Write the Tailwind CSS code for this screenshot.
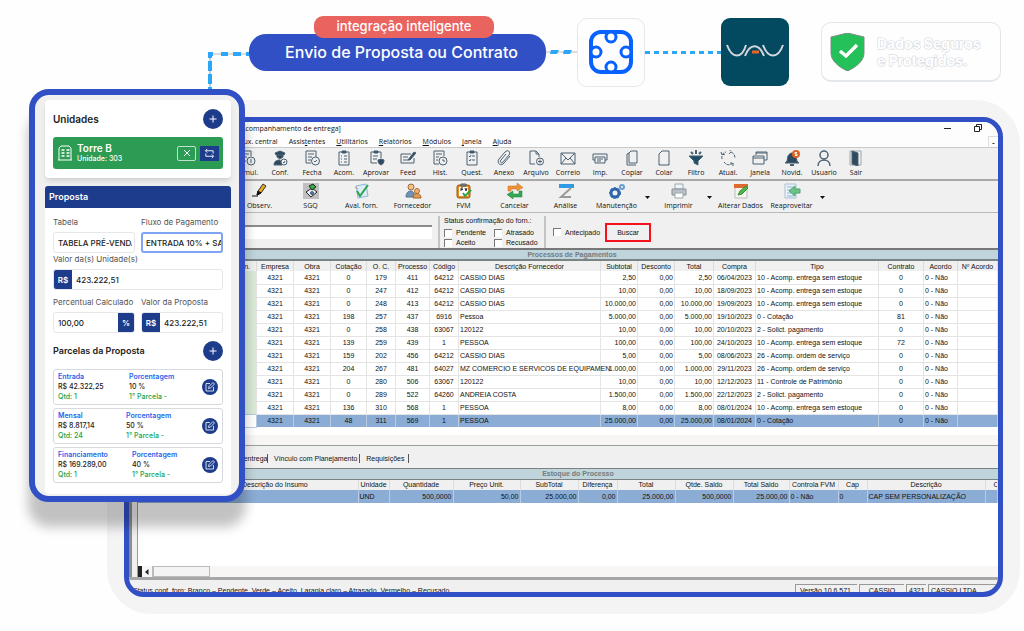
<!DOCTYPE html>
<html lang="pt-BR">
<head>
    <meta charset="UTF-8">
    <meta name="viewport" content="width=device-width, initial-scale=1.0">
    <title>Envio de Proposta ou Contrato</title>
    <script src="https://cdn.jsdelivr.net/npm/@tailwindcss/browser@4"></script>
</head>
<body class="bg-[#fefefe] font-['Inter',sans-serif] text-black">
<main class="relative flex min-h-screen flex-col">

    <!-- Fluxo da integração -->
    <header class="flex h-[100px] items-center pt-1 pl-[207px] pr-[23px]">
        <svg class="h-12 w-[42px] shrink-0 self-end" viewBox="0 0 42 48" fill="none" stroke="#2ba6f8" stroke-width="4">
            <path d="M3 2H42" stroke="#b9bcc2" stroke-width="1"/>
            <path d="M1 2H6M14 2h7M26 2h8M39 2h4"/>
            <path d="M3 0V48" stroke="#8a93a0" stroke-width="1"/>
            <path d="M3 0V6M3 9v10M3 22v10M3 35v14"/>
        </svg>
        <div class="relative flex h-[37px] w-[297px] shrink-0 items-center justify-center rounded-[17px] bg-[#3250c6] pl-2">
            <span class="absolute -top-[18px] left-[65px] flex h-[22px] w-[180px] items-center justify-center rounded-[9px] bg-[#e9635f] text-[13px] font-medium text-white">integração inteligente</span>
            <h1 class="text-[16px] font-medium whitespace-nowrap text-white">Envio de Proposta ou Contrato</h1>
        </div>
        <svg class="h-1.5 w-[31px] shrink-0" viewBox="0 0 31 6"><path d="M0 3H31" stroke="#b9bcc2"/><path d="M5 1h8l-2 4H4zM18 1h8l-2 4h-7z" fill="#2ba6f8"/></svg>
        <div class="flex h-[69px] w-[68px] shrink-0 items-center justify-center rounded-[10px] border border-[#e6e8eb]">
            <svg class="size-[46px]" viewBox="0 0 46 46" fill="none" stroke="#0762ff" stroke-width="4">
                <rect x="3" y="3" width="40" height="40" rx="10"/>
                <circle cx="23" cy="8" r="5" fill="#fff" stroke-width="3"/><circle cx="23" cy="38" r="5" fill="#fff" stroke-width="3"/>
                <circle cx="8" cy="23" r="5" fill="#fff" stroke-width="3"/><circle cx="38" cy="23" r="5" fill="#fff" stroke-width="3"/>
            </svg>
        </div>
        <div class="h-[3px] min-w-4 flex-1 bg-[repeating-linear-gradient(90deg,#2ba6f8_0_5px,#fefefe_5px_9px)]"></div>
        <div class="flex size-[68px] shrink-0 items-center justify-center rounded-[9px] bg-[#03495f]">
            <svg class="h-5 w-[60px]" viewBox="0 0 60 20" fill="none" stroke="#d3d6dc" stroke-width="2">
                <path d="M2 3C7 17 17 17 21 3M20 14C25 1 34 1 39 14M38 3c5 14 15 14 20 0"/>
                <path d="M27 10h7" stroke="#e8652c" stroke-width="3"/>
            </svg>
        </div>
        <div class="ml-8 flex h-[60px] w-[180px] shrink-0 items-center gap-3 rounded-[10px] border border-b-2 border-[#e3e6ea] pl-2">
            <svg class="h-[38px] w-[35px] shrink-0" viewBox="0 0 35 38"><path d="M17.500 0 34 4v16c0 8-8 14-16.500 18C9 34 1 28 1 20V4z" fill="#24c05a" stroke="#7f8b86" stroke-width="1"/><path d="m10 18 6 5L27 12" fill="none" stroke="#fff" stroke-width="3.500"/></svg>
            <p class="text-[14px] leading-[17px] font-bold whitespace-nowrap text-white [paint-order:stroke] [-webkit-text-stroke:1px_#cfd4da]">Dados Seguros<br>e Protegidos.</p>
        </div>
    </header>

    <div class="mb-[17px] ml-[107px] mr-1 flex flex-1 flex-col rounded-[44px] bg-[#f4f4f4] p-[17px]">
        <!-- Janela do sistema -->
        <section class="flex flex-1 flex-col overflow-hidden rounded-[20px] border-[5px] border-[#3250c6] bg-[#f0f0f0] font-['Open_Sans',sans-serif] text-[7px] leading-[9px] whitespace-nowrap text-[#111]">
            <div class="flex h-3 items-center justify-between bg-[#fdfdfd] pl-[112px] pr-4">
                <h2>Acompanhamento de entrega]</h2>
                <div class="flex items-center gap-[22px]">
                    <svg class="size-2" viewBox="0 0 8 8"><path d="M0 4.500h7" stroke="#222"/></svg>
                    <svg class="size-2" viewBox="0 0 8 8" fill="none" stroke="#222"><path d="M.5 2.500h5v5h-5zM2.500 2V.5h5v5H6"/></svg>
                </div>
            </div>
            <nav class="flex h-[14px] items-center gap-[11px] border-b border-[#c9c9c9] bg-[#fdfdfd] pl-[110px] pt-0.5">
                <a href="#">Aux. central</a>
                <a href="#">Assis<u>t</u>entes</a>
                <a href="#"><u>U</u>tilitários</a>
                <a href="#"><u>R</u>elatórios</a>
                <a href="#"><u>M</u>ódulos</a>
                <a href="#"><u>J</u>anela</a>
                <a href="#"><u>A</u>juda</a>
                <span class="ml-auto flex h-3 w-[10px] items-center justify-center border-l border-t border-[#ddd] font-bold">-</span>
            </nav>

            <!-- Barra principal -->
            <div id="barra1" class="flex h-[33px] shrink-0 border-b-2 border-[#a9a9a9] pl-[103px] pt-0.5"></div>

            <!-- Barra secundária -->
            <div id="barra2" class="flex h-8 shrink-0 border-b border-[#b9b9b9] pl-[105px] pt-0.5"></div>

            <!-- Filtros -->
            <form class="flex h-[37px] shrink-0 items-center border-b-2 border-[#777] pl-[111px] pt-[3px] font-['Liberation_Sans',sans-serif]">
                <input type="text" aria-label="Pesquisa" class="h-[14px] w-[192px] border-t-2 border-[#8c8c8c] bg-white">
                <fieldset aria-labelledby="status" class="ml-1.5 flex h-8 w-[108px] flex-col border-x-2 border-[#c4c4c4] pl-1">
                    <span id="status" class="leading-[9px]">Status confirmação do forn.:</span>
                    <div class="mt-[3px] grid grid-cols-[50px_50px] gap-y-px leading-[9px]">
                        <label class="flex items-center gap-1"><input type="checkbox" class="size-2 appearance-none border-l border-t border-[#777] bg-white">Pendente</label>
                        <label class="flex items-center gap-1"><input type="checkbox" class="size-2 appearance-none border-l border-t border-[#777] bg-white">Atrasado</label>
                        <label class="flex items-center gap-1"><input type="checkbox" class="size-2 appearance-none border-l border-t border-[#777] bg-white">Aceito</label>
                        <label class="flex items-center gap-1"><input type="checkbox" class="size-2 appearance-none border-l border-t border-[#777] bg-white">Recusado</label>
                    </div>
                </fieldset>
                <label class="ml-[7px] flex items-center gap-1"><input type="checkbox" class="size-2 appearance-none border-l border-t border-[#777] bg-white">Antecipado</label>
                <button type="button" class="ml-[5px] h-[19px] w-[46px] border-2 border-[#f5121c]">Buscar</button>
            </form>

            <div class="flex flex-1 border-l-[3px] border-[#8d8d8d] font-['Liberation_Sans',sans-serif]">
                <div class="w-[6px] shrink-0 border-r border-[#999]"></div>
                <div class="flex min-w-0 flex-1 flex-col bg-white">
                    <h3 class="h-[11px] border-b-2 border-[#7a8284] bg-[#bfd4db] pl-2 text-center leading-[10px] font-bold text-[#737b80]">Processos de Pagamentos</h3>
                    <table class="w-full table-fixed border-collapse">
                        <colgroup>
                            <col class="w-[118px]"><col class="w-[37px]"><col class="w-[37px]"><col class="w-[36px]"><col class="w-[29px]"><col class="w-[34px]"><col class="w-[29px]"><col class="w-[142px]"><col class="w-[37px]"><col class="w-[37px]"><col class="w-[39px]"><col class="w-[42px]"><col class="w-[123px]"><col class="w-[45px]"><col class="w-[34px]"><col>
                        </colgroup>
                        <thead>
                            <tr class="h-[10px] bg-[#f0f0f0] *:border-r *:border-[#dcdcdc] *:font-normal">
                                <th class="pr-1.5 text-right">n.</th><th>Empresa</th><th>Obra</th><th>Cotação</th><th>O. C.</th><th>Processo</th><th>Código</th><th>Descrição Fornecedor</th><th>Subtotal</th><th>Desconto</th><th>Total</th><th>Compra</th><th>Tipo</th><th>Contrato</th><th>Acordo</th><th>Nº Acordo</th>
                            </tr>
                        </thead>
                        <tbody id="processos"></tbody>
                    </table>
                    <div class="h-[7px]"></div>
                    <div class="h-[11px] border-b border-[#9aa09e] bg-[#f7f6f4]"></div>
                    <div class="flex h-[22px] items-center bg-[#f0f0f0] pl-[80px] pt-1">
                        <span class="w-[50px] border-r border-[#555] pr-0.5 text-right">Acomp. entrega</span>
                        <span class="border-r border-[#555] pl-1.5 pr-0.5">Vínculo com Planejamento</span>
                        <span class="border-r border-[#555] pl-1.5 pr-1">Requisições</span>
                    </div>
                    <h3 class="h-3 border-b border-t border-[#7a8284] bg-[#bfd4db] pl-5 text-center leading-[10px] font-bold text-[#737b80]">Estoque do Processo</h3>
                    <table class="w-full table-fixed border-collapse">
                        <colgroup>
                            <col class="w-[220px]"><col class="w-[31px]"><col class="w-[64px]"><col class="w-[67px]"><col class="w-[58px]"><col class="w-[39px]"><col class="w-[58px]"><col class="w-[58px]"><col class="w-[56px]"><col class="w-[49px]"><col class="w-[29px]"><col class="w-[118px]"><col>
                        </colgroup>
                        <thead>
                            <tr class="h-[10px] bg-[#f0f0f0] *:border-r *:border-[#dcdcdc] *:font-normal">
                                <th class="pl-[104px] text-left">Descrição do Insumo</th><th>Unidade</th><th>Quantidade</th><th>Preço Unit.</th><th>SubTotal</th><th>Diferença</th><th>Total</th><th>Qtde. Saldo</th><th>Total Saldo</th><th>Controla FVM</th><th>Cap</th><th>Descrição</th><th class="overflow-hidden pl-2 text-left">C</th>
                            </tr>
                        </thead>
                        <tbody>
                            <tr class="h-[13px] bg-[#8badd5] *:border-r *:border-[#b9cbe0] *:px-px">
                                <td></td><td>UND</td><td class="text-right">500,0000</td><td class="text-right">50,00</td><td class="text-right">25.000,00</td><td class="text-right">0,00</td><td class="text-right">25.000,00</td><td class="text-right">500,0000</td><td class="text-right">25.000,00</td><td>0 - Não</td><td>0</td><td>CAP SEM PERSONALIZAÇÃO</td><td></td>
                            </tr>
                        </tbody>
                    </table>
                    <div class="flex-1"></div>
                    <!-- Rolagem horizontal -->
                    <div class="flex h-[11px] bg-[#f7f6f4]">
                        <span class="w-1 bg-[#222]"></span>
                        <button type="button" aria-label="Rolar para a esquerda" class="flex w-[11px] items-center justify-center border-r border-[#bbb]"><svg class="size-1.5" viewBox="0 0 6 6"><path d="M4.500 0v6L1 3z" fill="#222"/></svg></button>
                        <span class="w-[57px] border border-[#bbb] bg-[#f4f4f4]"></span>
                    </div>
                </div>
            </div>
            <footer class="flex h-[15px] shrink-0 items-start gap-0.5 overflow-hidden border-t-[3px] border-[#a8a6a6] pl-1 font-['Liberation_Sans',sans-serif]">
                <span class="pt-1.5">Status conf. forn: Branco – Pendente&nbsp; Verde – Aceito&nbsp; Laranja claro – Atrasado&nbsp; Vermelho – Recusado</span>
                <span class="ml-auto mt-1 w-[62px] border-l border-t border-[#999] pl-1 pt-px">Versão 10.6.571</span>
                <span class="mt-1 w-[45px] border-l border-t border-[#999] pt-px text-center">CASSIO</span>
                <span class="mt-1 w-5 border-l border-t border-[#999] pl-0.5 pt-px">4321</span>
                <span class="mt-1 w-[70px] border-l border-t border-[#999] pl-0.5 pt-px">CASSIO LTDA</span>
            </footer>
        </section>
    </div>

    <!-- Cartão da proposta -->
    <aside class="absolute left-[29px] top-[89px] w-[216px] rounded-[20px] border-[6px] border-[#3250c6] bg-[#f0f0f0] pb-0.5 pl-2.5 pr-2 pt-[5px] text-[8px] leading-[10px] text-[#222] shadow-[0_24px_12px_1px_rgba(0,0,0,0.24)]">
        <section class="h-[78px] rounded-[4px] bg-white px-2 pt-[9px] shadow-md">
            <div class="flex h-5 items-center justify-between">
                <h2 class="text-[10px] font-semibold">Unidades</h2>
                <button type="button" aria-label="Adicionar unidade" class="flex size-5 items-center justify-center rounded-full bg-[#1d3c8b]"><svg class="size-2" viewBox="0 0 8 8"><path d="M4 .5v7M.5 4h7" stroke="#fff"/></svg></button>
            </div>
            <div class="mt-2 flex h-8 items-center rounded-[3px] bg-[#2c9c54] px-1 text-white">
                <svg class="size-4 shrink-0" viewBox="0 0 16 16" fill="none" stroke="#fff"><path d="M2 15V3l2-2h8l2 2v12M1 15h14"/><path d="M4.500 5h3m2 0h3m-8 3h3m2 0h3m-8 3h3m2 0h3" stroke-width="1.500"/></svg>
                <div class="ml-1 flex-1">
                    <p class="text-[10px] leading-3 font-semibold">Torre B</p>
                    <p class="text-[7px] font-medium">Unidade: 303</p>
                </div>
                <button type="button" aria-label="Remover" class="flex h-[15px] w-[19px] items-center justify-center rounded-[2px] border border-white/70"><svg class="size-2" viewBox="0 0 8 8"><path d="m1 1 6 6M7 1 1 7" stroke="#fff"/></svg></button>
                <button type="button" aria-label="Trocar" class="ml-1 flex h-[15px] w-[19px] items-center justify-center bg-[#1d3c8b]"><svg class="size-[11px]" viewBox="0 0 12 12" fill="none" stroke="#fff"><path d="M3.500 1 1.500 3l2 2M2 3h8v3M8.500 7l2 2-2 2M10 9H2V6"/></svg></button>
            </div>
        </section>

        <section class="mt-2 rounded-[4px] bg-white pb-[11px]">
            <h2 class="flex h-[22px] items-center rounded-t-[3px] bg-[#1d3c8b] pl-1 text-[9px] font-semibold text-white">Proposta</h2>
            <form class="px-2">
                <div class="grid grid-cols-2 gap-x-1.5 pt-2">
                    <div>
                        <label for="tabela" class="block h-4 pt-px text-[#555]">Tabela</label>
                        <input id="tabela" type="text" value="TABELA PRÉ-VENDAS" class="h-[21px] w-full rounded-[3px] border border-[#e5e7eb] pl-1 pr-0.5 text-[8px] font-medium">
                    </div>
                    <div>
                        <label for="fluxo" class="block h-4 pt-px text-[#555]">Fluxo de Pagamento</label>
                        <input id="fluxo" type="text" value="ENTRADA 10% + SALDO" class="h-[21px] w-full rounded-[3px] border-2 border-[#7ea4f3] pl-[3px] text-[8px] font-medium">
                    </div>
                </div>
                <label for="valor" class="block h-4 pt-px text-[#555]">Valor da(s) Unidade(s)</label>
                <div class="flex h-[21px] overflow-hidden rounded-[3px] border border-[#e5e7eb]">
                    <span class="flex w-[18px] shrink-0 items-center justify-center bg-[#1d3c8b] font-semibold text-white">R$</span>
                    <input id="valor" type="text" value="423.222,51" class="min-w-0 flex-1 px-1 font-medium">
                </div>
                <div class="grid grid-cols-2 gap-x-1.5 pt-[7px]">
                    <div>
                        <label for="percentual" class="block h-[15px] whitespace-nowrap text-[#555]">Percentual Calculado</label>
                        <div class="flex h-[21px] overflow-hidden rounded-[3px] border border-[#e5e7eb]">
                            <input id="percentual" type="text" value="100,00" class="min-w-0 flex-1 px-1 font-medium">
                            <span class="flex w-4 shrink-0 items-center justify-center bg-[#1d3c8b] font-semibold text-white">%</span>
                        </div>
                    </div>
                    <div>
                        <label for="proposta" class="block h-[15px] whitespace-nowrap text-[#555]">Valor da Proposta</label>
                        <div class="flex h-[21px] overflow-hidden rounded-[3px] border border-[#e5e7eb]">
                            <span class="flex w-[18px] shrink-0 items-center justify-center bg-[#1d3c8b] font-semibold text-white">R$</span>
                            <input id="proposta" type="text" value="423.222,51" class="min-w-0 flex-1 px-1 font-medium">
                        </div>
                    </div>
                </div>
                <div class="mt-2 flex h-5 items-center justify-between">
                    <h3 class="text-[9px] font-semibold whitespace-nowrap">Parcelas da Proposta</h3>
                    <button type="button" aria-label="Adicionar parcela" class="flex size-5 items-center justify-center rounded-full bg-[#1d3c8b]"><svg class="size-2" viewBox="0 0 8 8"><path d="M4 .5v7M.5 4h7" stroke="#fff"/></svg></button>
                </div>
                <div id="parcelas" class="mt-2 flex flex-col gap-[3px] text-[7px] font-medium whitespace-nowrap"></div>
            </form>
        </section>
    </aside>
</main>

<script>
// Ícones desenhados em 16x16
const ICONES = {
    simul: '<path d="M2 1h9v5M2 1v10h4M4 4h5M4 7h3"/><circle cx="11" cy="11" r="4"/><path d="M11 9v4"/>',
    conf: '<path d="M3 3l5-2 5 2-1 2H4z" fill="#2f4a5e"/><path d="M5 5v2l3 2 3-2V5z" fill="#2f4a5e"/><path d="M2 15c0-4 3-5 6-5l2 5z" fill="#2f4a5e"/><circle cx="12" cy="12" r="3" fill="#f0f0f0"/><path d="m11 12 1 1 1-2"/>',
    fecha: '<path d="M2 1h10v6M2 1v12h5M4 4h6M4 7h4M4 10h3"/><circle cx="11.500" cy="11" r="4" fill="#f0f0f0"/><path d="m10 11 1 1 2-2"/>',
    acom: '<path d="M3 2h10v13H3z"/><path d="M6 1h4v2H6z" fill="#2f4a5e"/><path d="M5 6h1m2 0h3M5 9h1m2 0h3M5 12h1m2 0h3"/>',
    aprovar: '<path d="M3 2h10v6M3 2v11h6"/><path d="M6 1h4v2H6z" fill="#2f4a5e"/><path d="M5 6h5M5 9h4"/><path d="m13 9 3 1c0 3-1 4-3 5-2-1-3-2-3-5z" fill="#2f4a5e"/>',
    feed: '<path d="M11 4H1v9h13V8M3 7h5M3 10h5"/><path d="m8 10 6-8 2 1-6 7z" fill="#2f4a5e"/>',
    hist: '<path d="M2 1h10v5M2 1v13h5M4 4h6M4 7h3M4 10h2"/><circle cx="11" cy="11" r="4" fill="#f0f0f0"/><path d="M11 9v2h2"/>',
    quest: '<path d="M3 2h10v13H3z"/><path d="M6 1h4v2H6z" fill="#2f4a5e"/><path d="m5 6 1 1 1-2m1 1h3M5 10l1 1 1-2m1 1h3"/>',
    anexo: '<path d="M14 6 8 13c-3 4-8 0-5-4l6-7c3-3 6 0 4 3l-6 7c-1 2-4 0-2-2l5-6"/>',
    arquivo: '<path d="M11 7V4L8 1H2v13h5M8 1v3h3"/><circle cx="12" cy="11.500" r="3.500"/><path d="M12 9.500v4M10 11.500h4"/>',
    correio: '<path d="M1 3h14v11H1zl7 7 7-7M1 14l5-6m9 6-5-6"/>',
    imp: '<path d="M3 10H1V4h14v6h-2M3 7h10v6H3zM5 9h6M5 11h4"/>',
    copiar: '<path d="M7 1h6v12H5V3zM5 3 3 4v11h9"/>',
    colar: '<path d="M6 1h7v14H3V4z"/>',
    filtro: '<path d="M1 6h14l-5 5v4l-4-2v-2z" fill="#1f4f66"/><path d="M5 4 3 2m5 2V0m3 4 2-2" stroke-width="2"/>',
    atual: '<path d="M2 9C1 5 4 2 6 2M1 2l1 3 3-1M11 2c3 1 4 4 4 6M9 4l2-2-1-2M13 13c-3 3-7 2-9-1m9 4V13h-3" stroke-dasharray="3 1"/>',
    janela: '<path d="M4 5V2h11v8h-3M4 3h11"/><path d="M1 6h11v8H1zM1 8h11"/>',
    novid: '<path d="M1 13c3-2 2-4 3-7 2-4 6-4 8 0 1 3 0 5 3 7z" fill="#2f4a5e"/><path d="M6 15h4" stroke-width="2"/><circle cx="12" cy="4" r="4" fill="#dd6420" stroke="none"/><path d="M13 2.500h-2V4h2v1.500h-2" stroke="#fff"/>',
    usuario: '<circle cx="8" cy="5" r="4" stroke-width="1.500"/><path d="M2 16c0-8 12-8 12 0" stroke-width="1.500"/>',
    sair: '<path d="M2 1v14h11V1z" stroke="#9aa5ad"/><path d="m4 1 6 2v13l-6-2z" fill="#2f4a5e"/>',
    observ: '<path d="M0 13h6" stroke="#111"/><path d="m5 12 1-4 5-7 3 2-5 7z" fill="#e4a91b" stroke="#333"/><path d="m5 12 1-4 3 2z" fill="#111" stroke="#111"/>',
    sgq: '<path d="M0 0h16v16H0z" fill="#c0c0c0" stroke="none"/><path d="m3 9 6-4 5 4-6 5z" fill="#eee" stroke="#222"/><path d="m6 3 4-2 3 3-4 3z" fill="#2fae43" stroke="#222"/><circle cx="9" cy="10" r="1.500" fill="#3a75c8"/>',
    aval: '<path d="M2 3 12 1l2 12-10 2z" fill="#dcecf8" stroke="#8bb6d6"/><path d="m3 8 3 5 8-11" stroke="#2fa34a" stroke-width="2"/><path d="m1 4 3 2" stroke="#e69a29"/>',
    fornecedor: '<circle cx="6" cy="4" r="3" fill="#f2c38e" stroke="#a5672c"/><path d="M1 14c0-8 9-8 9 0z" fill="#6d92b4" stroke="#55738e"/><circle cx="12" cy="8" r="2.500" fill="#f2b078" stroke="#b06a2b"/><path d="M8 15c0-6 8-6 8 0z" fill="#e49a55" stroke="#a5672c"/>',
    fvm: '<rect x="1" y="2" width="13" height="13" rx="2" fill="#e58a22" stroke="#9a5a10"/><path d="M3 4h9v9H3z" fill="#fff" stroke="none"/><path d="M5 1h5v2H5z" fill="#888"/><path d="M5 8V5h2M5 6.500h2M9 5l1 3 1-3" stroke="#333"/><path d="m7 10 2 3 6-6" stroke="#2fa34a" stroke-width="2"/>',
    cancelar: '<path d="M1 8V3h9V0l6 4.500L10 8V6H4v2z" fill="#ef9236" stroke="#c56b19" stroke-width=".5"/><path d="M15 8v6H6v2l-6-4.500L6 8v3h6V8z" fill="#35a854" stroke="#1d7d38" stroke-width=".5"/>',
    analise: '<path d="M1 1h15v4H1z" fill="#2d9be6" stroke="none"/><path d="M13 5 3 14h10" stroke="#9a9a9a" stroke-width="2"/>',
    manutencao: '<circle cx="6" cy="10" r="4" stroke="#2e66ac" stroke-width="3"/><circle cx="6" cy="10" r="5.500" stroke="#2e66ac" stroke-dasharray="2 2"/><circle cx="13" cy="4" r="2" stroke="#6a9bd0" stroke-width="2"/>',
    imprimir: '<path d="M4 1h8v5H4z" fill="#eef4fb" stroke="#9aa"/><path d="M1 6h14v6H1z" fill="#b9bfc6" stroke="#8a9097"/><path d="M4 10h8v5H4z" fill="#fff" stroke="#9aa"/>',
    alterar: '<path d="M2 2h12v13H2z" fill="#f6f6ef" stroke="#bbb"/><path d="M1 1h14v4H1z" fill="#de6a2f" stroke="none"/><path d="m5 12 2-4 6-5 2 2-6 6z" fill="#55b648" stroke="#2f8f3a"/>',
    reaproveitar: '<path d="M1 1h11v14H1z" fill="#eaf2fa" stroke="#a9bfd2"/><path d="M3 4h6M3 7h4M3 10h4M3 13h7" stroke="#8fb4d8"/><path d="m5 8 6-5v3h5v4h-5v3z" fill="#6cc38a" stroke="#4aa76b"/>'
};

function icone(nome) {
    return `<svg class="h-4 w-[18px]" viewBox="0 0 16 16" fill="none" stroke="#4a6173">${ICONES[nome]}</svg>`;
}

const barra1 = [['simul', 'Simul.'], ['conf', 'Conf.'], ['fecha', 'Fecha'], ['acom', 'Acom.'], ['aprovar', 'Aprovar'], ['feed', 'Feed'], ['hist', 'Hist.'], ['quest', 'Quest.'], ['anexo', 'Anexo'], ['arquivo', 'Arquivo'], ['correio', 'Correio'], ['imp', 'Imp.'], ['copiar', 'Copiar'], ['colar', 'Colar'], ['filtro', 'Filtro'], ['atual', 'Atual.'], ['janela', 'Janela'], ['novid', 'Novid.'], ['usuario', 'Usuario'], ['sair', 'Sair']];
document.getElementById('barra1').innerHTML = barra1.map(([i, t]) =>
    `<button type="button" class="flex w-8 shrink-0 flex-col items-center">${icone(i)}<span class="mt-0.5">${t}</span></button>`).join('');

// O terceiro valor indica se o botão tem menu suspenso
const barra2 = [['observ', 'Observ.'], ['sgq', 'SGQ'], ['aval', 'Aval. forn.'], ['fornecedor', 'Fornecedor'], ['fvm', 'FVM'], ['cancelar', 'Cancelar'], ['analise', 'Análise'], ['manutencao', 'Manutenção', true], ['imprimir', 'Imprimir', true], ['alterar', 'Alterar Dados'], ['reaproveitar', 'Reaproveitar', true]];
document.getElementById('barra2').innerHTML = barra2.map(([i, t, menu]) =>
    `<button type="button" class="flex w-[51px] shrink-0 flex-col items-center">${icone(i)}<span class="mt-0.5">${t}</span></button>` +
    (menu ? '<button type="button" aria-label="Mais opções" class="flex w-[11px] items-center justify-center"><svg class="h-[3px] w-[5px]" viewBox="0 0 5 3"><path d="M0 0h5L2.500 3z" fill="#111"/></svg></button>' : '')).join('');

const processos = [
    ['0', '179', '411', '64212', 'CASSIO DIAS', '2,50', '06/04/2023', '10 - Acomp. entrega sem estoque', '0'],
    ['0', '247', '412', '64212', 'CASSIO DIAS', '10,00', '18/09/2023', '10 - Acomp. entrega sem estoque', '0'],
    ['0', '248', '413', '64212', 'CASSIO DIAS', '10.000,00', '19/09/2023', '10 - Acomp. entrega sem estoque', '0'],
    ['198', '257', '437', '6916', 'Pessoa', '5.000,00', '19/10/2023', '0 - Cotação', '81'],
    ['0', '258', '438', '63067', '120122', '10,00', '20/10/2023', '2 - Solict. pagamento', '0'],
    ['139', '259', '439', '1', 'PESSOA', '100,00', '24/10/2023', '10 - Acomp. entrega sem estoque', '72'],
    ['159', '202', '456', '64212', 'CASSIO DIAS', '5,00', '08/06/2023', '26 - Acomp. ordem de serviço', '0'],
    ['204', '267', '481', '64027', 'MZ COMERCIO E SERVICOS DE EQUIPAMEN', '1.000,00', '29/11/2023', '26 - Acomp. ordem de serviço', '0'],
    ['0', '280', '506', '63067', '120122', '10,00', '12/12/2023', '11 - Controle de Patrimônio', '0'],
    ['0', '289', '522', '64260', 'ANDREIA COSTA', '1.500,00', '22/12/2023', '2 - Solict. pagamento', '0'],
    ['136', '310', '568', '1', 'PESSOA', '8,00', '08/01/2024', '10 - Acomp. entrega sem estoque', '0'],
    ['48', '311', '569', '1', 'PESSOA', '25.000,00', '08/01/2024', '0 - Cotação', '0']
];
document.getElementById('processos').innerHTML = processos.map((p, i) => {
    const ultimo = i === processos.length - 1;
    const linha = ultimo
        ? 'h-[13px] bg-[#8badd5] text-center *:border-r *:border-[#b9cbe0] *:px-px'
        : 'h-[13px] border-b border-[#e4e4e4] text-center *:border-r *:border-[#e4e4e4] *:px-px';
    const primeira = ultimo ? 'border border-[#222] bg-white' : 'bg-[#d9ead7]';
    return `<tr class="${linha}"><td class="${primeira}"></td><td>4321</td><td>4321</td><td>${p[0]}</td><td>${p[1]}</td><td>${p[2]}</td><td>${p[3]}</td>
        <td class="text-left">${p[4]}</td><td class="text-right">${p[5]}</td><td class="text-right">0,00</td><td class="text-right">${p[5]}</td>
        <td>${p[6]}</td><td class="text-left">${p[7]}</td><td>${p[8]}</td><td class="text-left">0 - Não</td><td></td></tr>`;
}).join('');

const parcelas = [
    ['Entrada', 'R$ 42.322,25', '1', '10 %', 'w-[71px]'],
    ['Mensal', 'R$ 8.817,14', '24', '50 %', 'w-[68px]'],
    ['Financiamento', 'R$ 169.289,00', '1', '40 %', 'w-[74px]']
];
document.getElementById('parcelas').innerHTML = parcelas.map(([nome, valor, qtd, pct, largura]) =>
    `<div class="flex h-9 items-center rounded-[3px] border border-[#d6d9dd] px-1">
        <div class="${largura}"><p class="font-semibold text-[#2563eb]">${nome}</p><p>${valor}</p><p class="text-[#16a34a]">Qtd: ${qtd}</p></div>
        <div class="flex-1"><p class="font-semibold text-[#2563eb]">Porcentagem</p><p>${pct}</p><p class="text-[#16a34a]">1° Parcela -</p></div>
        <button type="button" aria-label="Editar parcela" class="flex size-4 items-center justify-center rounded-full bg-[#1d3c8b]"><svg class="size-2.5" viewBox="0 0 10 10" fill="none" stroke="#fff"><path d="M5 1.500H1v7.500h7.500V5M3.500 6.500l.5-2L8 .5 9.500 2l-4 4z" stroke-width=".8"/></svg></button>
    </div>`).join('');
</script>
</body>
</html>
